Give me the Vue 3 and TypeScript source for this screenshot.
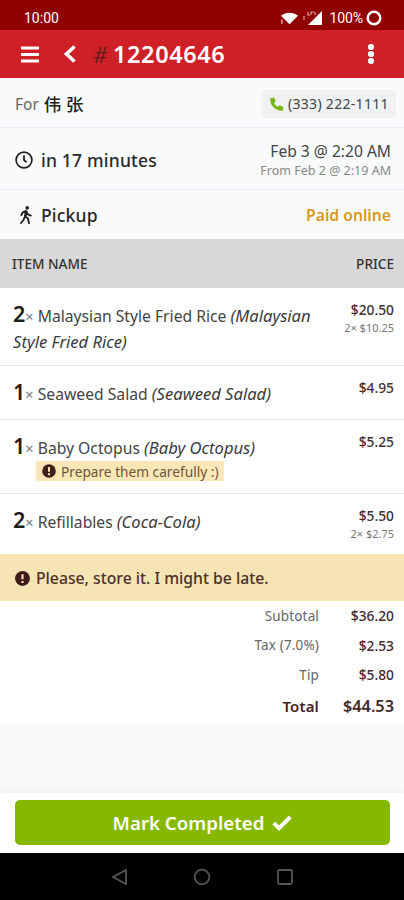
<script setup lang="ts">
interface OrderItem {
  qty: number
  name: string
  detail: string
  price: string
  unit?: string
  note?: string
  size: string
}

interface TotalLine {
  label: string
  value: string
  grand?: boolean
}

const items: OrderItem[] = [
  { qty: 2, name: 'Malaysian Style Fried Rice', detail: '(Malaysian Style Fried Rice)', price: '$20.50', unit: '2× $10.25', size: 'tall' },
  { qty: 1, name: 'Seaweed Salad', detail: '(Seaweed Salad)', price: '$4.95', size: 'short' },
  { qty: 1, name: 'Baby Octopus', detail: '(Baby Octopus)', price: '$5.25', note: 'Prepare them carefully :)', size: 'noted' },
  { qty: 2, name: 'Refillables', detail: '(Coca-Cola)', price: '$5.50', unit: '2× $2.75', size: 'medium' },
]

const totals: TotalLine[] = [
  { label: 'Subtotal', value: '$36.20' },
  { label: 'Tax (7.0%)', value: '$2.53' },
  { label: 'Tip', value: '$5.80' },
  { label: 'Total', value: '$44.53', grand: true },
]
</script>

<template>
  <div class="screen">
    <div class="status">
      <span class="clock">10:00</span>
      <svg class="wifi" viewBox="0 0 20 16"><path d="M1 5.500C6 1.300 14 1.300 19 5.500L10 14.500z" fill="#fff" /><path d="M2 9.500v4.500" stroke="#d99" stroke-width="1.800" /></svg>
      <svg class="signal" viewBox="0 0 20 16"><path d="M19 1v14H5z" fill="#fff" /><path d="M5 2v3h2M8 5V2h3M12 2v3M1 6v4" stroke="#e3a5a5" stroke-width="1.2" fill="none" /></svg>
      <span class="percent">100%</span>
      <svg class="battery" viewBox="0 0 16 16"><circle cx="8" cy="8" r="6.3" fill="none" stroke="#fff" stroke-width="2.4" /></svg>
    </div>

    <header class="appbar">
      <svg class="burger" viewBox="0 0 18 17"><path d="M0 2h18M0 8.5h18M0 15h18" stroke="#fff" stroke-width="2.9" /></svg>
      <svg class="back" viewBox="0 0 14 18"><path d="M11.5 1.5L3.5 9l8 7.5" fill="none" stroke="#fff" stroke-width="3.6" /></svg>
      <span class="hash">#</span>
      <span class="number">12204646</span>
      <svg class="dots" viewBox="0 0 8 20"><circle cx="4" cy="3" r="3.100" /><circle cx="4" cy="10" r="3.100" /><circle cx="4" cy="17" r="3.100" /></svg>
    </header>

    <section class="row customer">
      <span class="for">For</span>
      <span class="name">伟 张</span>
      <div class="phone">
        <svg viewBox="0 0 14 14"><path d="M.8 1.2L3.5.5q.6-.1.8.4l1.3 3q.2.5-.2.8L4 6q1.3 2.700 4 4l1.300-1.400q.3-.4.8-.2l3 1.300q.5.2.4.8l-.7 2.700q-.1.6-.7.6Q6.900 13.700 3.500 10.300T.2 1.900q0-.6.6-.7z" fill="#79b414" /></svg>
        <span>(333) 222-1111</span>
      </div>
    </section>

    <section class="row schedule">
      <svg class="time" viewBox="0 0 18 18"><circle cx="9" cy="9" r="7.900" fill="none" stroke="#222" stroke-width="1.700" /><path d="M9 4.300V9l2.600 2.300" fill="none" stroke="#222" stroke-width="1.800" /></svg>
      <span class="eta">in 17 minutes</span>
      <div class="dates">
        <span class="due">Feb 3 @ 2:20 AM</span>
        <span class="from">From Feb 2 @ 2:19 AM</span>
      </div>
    </section>

    <section class="row method">
      <svg class="walk" viewBox="0 0 12 18"><circle cx="7.200" cy="1.900" r="1.800" fill="#222" /><path d="M1.400 9l1.100-2.400L6 4.900l1.600 3.300 3.200 1.400M6.200 5.300L5 10.200l3 2.300 1 4.700M4.400 11.500L3.500 14 1 17" fill="none" stroke="#222" stroke-width="1.900" stroke-linejoin="round" stroke-linecap="round" /><path d="M5 4.800l2.500.5-.8 5-2.300-.3z" fill="#222" /></svg>
      <span class="pickup">Pickup</span>
      <span class="paid">Paid online</span>
    </section>

    <div class="thead"><span class="col-name">ITEM NAME</span><span class="col-price">PRICE</span></div>

    <article v-for="item in items" :key="item.name" class="item" :class="item.size">
      <div class="desc">
        <div class="line"><b>{{ item.qty }}</b><span class="times">×</span> <span class="title">{{ item.name }}</span> <i>{{ item.detail }}</i></div>
        <div v-if="item.note" class="note">
          <svg viewBox="0 0 14 14"><circle cx="7" cy="7" r="6.800" fill="#3e1f1c" /><path d="M7 3v4.700M7 9.300v2" stroke="#f8e3b2" stroke-width="2" /></svg>
          <span>{{ item.note }}</span>
        </div>
      </div>
      <div class="cost">
        <span class="price">{{ item.price }}</span>
        <span v-if="item.unit" class="unit">{{ item.unit }}</span>
      </div>
    </article>

    <div class="remark">
      <svg viewBox="0 0 14 14"><circle cx="7" cy="7" r="6.900" fill="#3e1a18" /><path d="M7 3v4.700M7 9.300v2" stroke="#f7e4b5" stroke-width="2" /></svg>
      <span>Please, store it. I might be late.</span>
    </div>

    <div class="totals">
      <div v-for="t in totals" :key="t.label" class="total" :class="{ grand: t.grand }">
        <span class="label">{{ t.label }}</span><span class="value">{{ t.value }}</span>
      </div>
    </div>

    <footer class="action">
      <button type="button">
        <span>Mark Completed</span>
        <svg viewBox="0 0 20 16"><path d="M1.700 8.200l5.300 5L18.300 2" fill="none" stroke="#fff" stroke-width="3.900" /></svg>
      </button>
    </footer>

    <nav class="system">
      <svg viewBox="0 0 18 18"><path d="M16 2v14L3 9z" /></svg>
      <svg viewBox="0 0 18 18"><circle cx="9" cy="9" r="7.300" /></svg>
      <svg viewBox="0 0 18 18"><rect x="2" y="2" width="14" height="14" rx="1.500" /></svg>
    </nav>
  </div>
</template>

<style>
body { margin: 0; }
</style>

<style scoped>
.screen { width: 404px; height: 900px; display: flex; flex-direction: column; overflow: hidden; background: #f8fafc; color: #333; font-family: "Noto Sans", "Noto Sans CJK SC", sans-serif; }
.screen * { box-sizing: border-box; }
.screen svg { flex: none; display: block; }
.screen span { white-space: nowrap; }
.status { height: 30px; flex: none; display: flex; align-items: center; padding: 5px 22px 0 24px; background: #900000; color: #fff; font-family: Roboto, sans-serif; font-size: 14px; }
.wifi { width: 19px; height: 16px; margin-left: auto; }
.signal { width: 20px; height: 16px; margin: 0 7px 0 4px; }
.percent { letter-spacing: -0.1px; }
.battery { width: 16px; height: 16px; margin-left: 3px; }
.appbar { height: 48px; flex: none; display: flex; align-items: center; padding: 0 29px 0 21px; background: #cf2027; color: #fff; }
.burger { width: 18px; height: 17px; }
.back { width: 14px; height: 18px; margin-left: 24px; }
.hash { width: 20px; margin-left: 16px; color: #651b1c; font-size: 22px; line-height: 48px; font-style: italic; }
.number { font-size: 23.500px; font-weight: 600; line-height: 48px; letter-spacing: 0.600px; }
.dots { width: 8px; height: 20px; margin-left: auto; fill: #fff; }
.row { flex: none; display: flex; align-items: center; border-bottom: 1px solid #e8ebed; }
.customer { height: 50px; padding: 2px 8px 0 15px; }
.for { color: #666; font-size: 15.500px; }
.name { margin-left: 5px; color: #222; font-size: 17.500px; font-weight: 500; }
.phone { width: 134px; height: 28px; display: flex; align-items: center; margin-left: auto; padding-left: 8px; border-radius: 4px; background: #f0f1f2; color: #444; font-size: 14px; letter-spacing: 0.300px; }
.phone svg { width: 14px; height: 14px; margin-right: 4px; }
.schedule { height: 62px; padding: 2px 13px 0 15px; }
.time { width: 18px; height: 18px; }
.eta { margin-left: 8px; color: #292929; font-size: 17.500px; font-weight: 500; letter-spacing: 0.200px; }
.dates { margin-left: auto; padding-top: 1px; display: flex; flex-direction: column; align-items: flex-end; }
.due { color: #444; font-size: 15.600px; line-height: 21px; }
.from { color: #888; font-size: 12.500px; line-height: 18px; }
.method { height: 49px; padding: 1px 13px 0 20px; border-bottom: 0; }
.walk { width: 12px; height: 18px; }
.pickup { margin-left: 9px; color: #292929; font-size: 17.500px; font-weight: 500; letter-spacing: 0.200px; }
.paid { margin-left: auto; color: #d99a20; font-size: 15.700px; font-weight: 600; }
.thead { height: 49px; flex: none; display: flex; align-items: center; justify-content: space-between; padding: 0 10px 1px 12px; background: #d8d8d8; color: #333; font-size: 13.600px; font-weight: 500; }
.item { flex: none; display: flex; justify-content: space-between; padding: 12px 10px 0 13px; background: #fff; border-bottom: 1px solid #e8eaec; }
.tall { height: 78px; }
.short { height: 54px; }
.noted { height: 74px; }
.medium { height: 60px; border-bottom: 0; }
.desc { width: 306px; padding-top: 3px; }
.line { font-size: 15.700px; line-height: 26px; color: #444; }
.line b { color: #1d1d1d; font-size: 21.500px; font-weight: 600; line-height: 20px; }
.times { color: #777; font-size: 14.500px; }
.line i { color: #3b3b3b; font-size: 16.600px; line-height: 20px; }
.note { width: 188px; height: 20px; display: flex; align-items: center; margin: 0 0 0 23px; padding-left: 6px; background: #fbe6b7; color: #6b5840; font-size: 13.700px; }
.note svg { width: 14px; height: 14px; margin-right: 5px; }
.cost { display: flex; flex-direction: column; align-items: flex-end; }
.price { color: #432f2c; font-size: 13.800px; font-weight: 500; line-height: 20px; }
.unit { color: #777; font-size: 11px; line-height: 16px; }
.remark { height: 47px; flex: none; display: flex; align-items: center; padding: 1px 15px 0; background: #f7e4b5; color: #4b3028; font-size: 15.750px; font-weight: 500; }
.remark svg { width: 15px; height: 15px; margin-right: 6px; }
.totals { height: 123px; flex: none; background: #fff; }
.total { height: 29.500px; display: flex; align-items: center; justify-content: flex-end; padding-right: 10px; color: #666; font-size: 13.500px; }
.label { letter-spacing: 0.150px; }
.value { width: 75px; text-align: right; color: #442a29; font-size: 13.800px; font-weight: 500; }
.grand { height: 33px; color: #422525; font-weight: 600; font-size: 15px; }
.grand .value { font-size: 16.300px; font-weight: 600; }
.action { height: 60px; flex: none; margin-top: auto; padding: 7px 14px 7px 15px; background: #fff; box-shadow: 0 -2px 8px rgba(0, 0, 0, 0.06); }
.action button { width: 100%; height: 45px; display: flex; align-items: center; justify-content: center; gap: 8px; padding: 0; border: 0; border-radius: 5px; background: #86b800; color: #fff; font-family: inherit; font-size: 18.700px; font-weight: 600; }
.action button svg { width: 20px; height: 16px; }
.system { height: 47px; flex: none; display: flex; align-items: center; justify-content: center; gap: 65px; background: #000; }
.system svg { width: 18px; height: 18px; fill: none; stroke: #555; stroke-width: 1.800; }
</style>
